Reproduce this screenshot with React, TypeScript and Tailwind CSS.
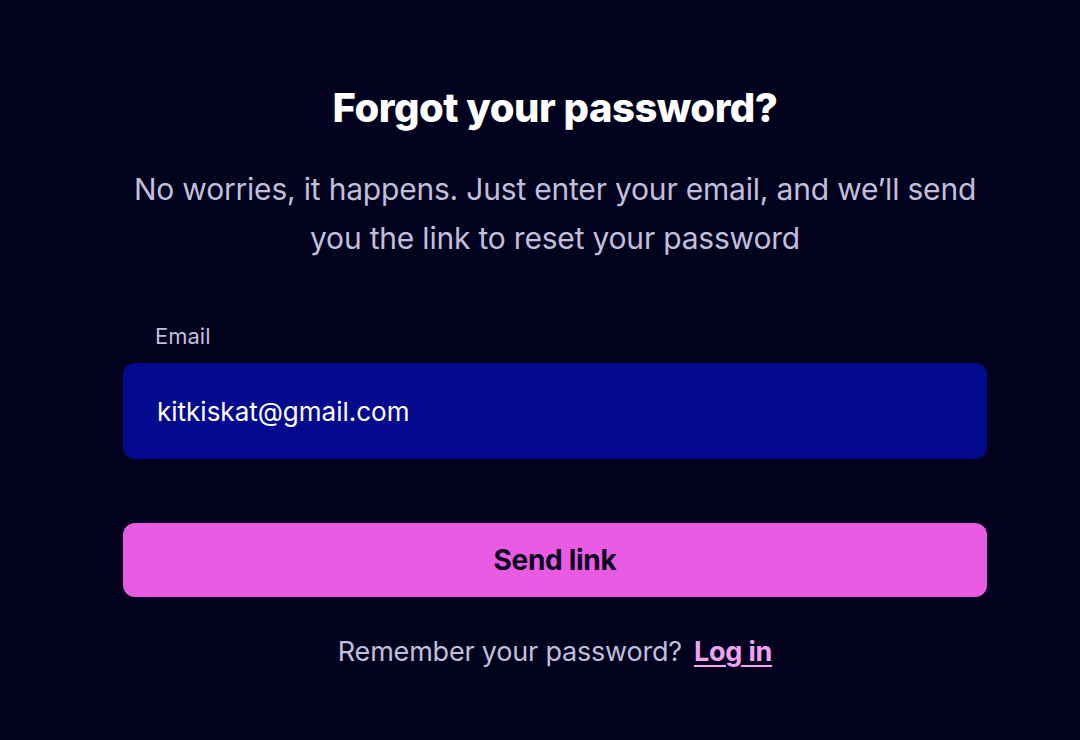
export default function App() {
  return (
    <div
      className="w-[1080px] h-[740px] bg-[#03021e] flex flex-col"
      style={{ fontFamily: 'Inter, "Noto Sans", sans-serif' }}
    >
      <div className="ml-[123px] w-[864px] flex flex-col">
        <h1 className="mt-[84px] text-center text-white text-[40px] leading-[48px] font-extrabold tracking-[-0.5px]">
          Forgot your password?
        </h1>
        <p className="mt-[33px] text-center text-[#c0bfdc] text-[30px] leading-[49px] tracking-[-0.2px]">
          No worries, it happens. Just enter your email, and we’ll send
          <br />
          you the link to reset your password
        </p>

        {/* Email field */}
        <label className="mt-[59px] ml-[32px] text-[#c0bfdc] text-[22px] leading-[28px]">Email</label>
        <div className="mt-[13px] h-[96px] rounded-xl bg-[#040a8e] flex items-center px-[34px]">
          <span className="text-white text-[26px]">kitkiskat@gmail.com</span>
        </div>

        <button className="mt-[64px] h-[74px] rounded-xl bg-[#ea5be3] text-[#0a0520] text-[28px] font-bold tracking-[-0.3px]">
          Send link
        </button>

        <div className="mt-[37px] text-center text-[27px] leading-[36px] tracking-[-0.2px]">
          <span className="text-[#c0bfdc]">Remember your password?</span>
          <a className="ml-3 text-[#f2a3ef] font-bold underline underline-offset-4">Log in</a>
        </div>
      </div>
    </div>
  );
}
